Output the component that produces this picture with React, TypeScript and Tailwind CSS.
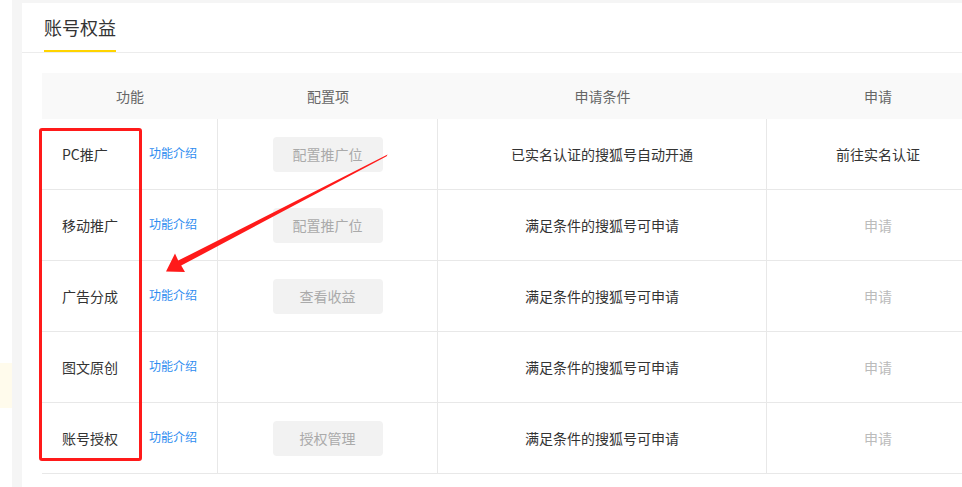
import React from "react";

const rows = [
  { name: "PC推广", btn: "配置推广位", cond: "已实名认证的搜狐号自动开通", action: "前往实名认证", active: true },
  { name: "移动推广", btn: "配置推广位", cond: "满足条件的搜狐号可申请", action: "申请", active: false },
  { name: "广告分成", btn: "查看收益", cond: "满足条件的搜狐号可申请", action: "申请", active: false },
  { name: "图文原创", btn: "", cond: "满足条件的搜狐号可申请", action: "申请", active: false },
  { name: "账号授权", btn: "授权管理", cond: "满足条件的搜狐号可申请", action: "申请", active: false },
];

export default function App() {
  return (
    <div
      className="relative flex w-[962px] h-[487px] overflow-hidden bg-white"
      style={{ fontFamily: '"Noto Sans CJK SC", "Noto Sans", sans-serif' }}
    >
      {/* sidebar edge */}
      <div className="w-[12px] shrink-0 bg-white flex flex-col">
        <div className="h-[363px]" />
        <div className="h-[45px] bg-[#fffbec]" />
      </div>
      {/* main */}
      <div className="flex-1 bg-[#f5f5f5] pl-[10px] pt-[3px]">
        <div className="w-[1000px] h-[500px] bg-white">
          <div className="flex border-b border-[#ececec] pl-[22px]">
            <div className="h-[49px] flex items-center border-b-2 border-[#ffd400] text-[18px] leading-none text-[#333] pt-[1px]">
              账号权益
            </div>
          </div>
          <div className="pl-[20px] pt-[20px]">
            <div className="flex h-[46px] bg-[#f9f9f9] text-[14px] text-[#666] items-center">
              <div className="w-[176px] text-center">功能</div>
              <div className="w-[220px] text-center">配置项</div>
              <div className="w-[329px] text-center">申请条件</div>
              <div className="w-[222px] text-center">申请</div>
            </div>
            {rows.map((r) => (
              <div key={r.name} className="flex h-[71px] border-b border-[#e8e8e8] text-[14px]">
                <div className="w-[176px] flex items-center border-r border-[#e8e8e8]">
                  <div className="w-[107px] shrink-0 pl-[20px] text-[#333] pt-[1px]">{r.name}</div>
                  <div className="text-[12px] text-[#2d8cf0] pb-[2px]">功能介绍</div>
                </div>
                <div className="w-[220px] flex items-center justify-center border-r border-[#e8e8e8]">
                  {r.btn && (
                    <div className="w-[110px] h-[35px] rounded-[4px] bg-[#f2f2f2] text-[#aaa] flex items-center justify-center">
                      {r.btn}
                    </div>
                  )}
                </div>
                <div className="w-[329px] flex items-center justify-center border-r border-[#e8e8e8] text-[#333]">
                  {r.cond}
                </div>
                <div className={`w-[222px] flex items-center justify-center ${r.active ? "text-[#333]" : "text-[#bbb]"}`}>
                  {r.action}
                </div>
              </div>
            ))}
          </div>
        </div>
      </div>
      {/* annotation overlay: red box */}
      <div className="absolute left-[39px] top-[128px] w-[103px] h-[333px] border-[3px] border-[#ff1a1a] rounded-[3px]" />
      {/* annotation overlay: red arrow */}
      <svg className="absolute left-0 top-0" width="962" height="487" viewBox="0 0 962 487">
        <polygon
          points="387.6,154.6 386.6,156.2 181.2,265.6 185,272 166,271.5 175,253.5 178.2,260.6"
          fill="#ff1a1a"
        />
      </svg>
    </div>
  );
}
